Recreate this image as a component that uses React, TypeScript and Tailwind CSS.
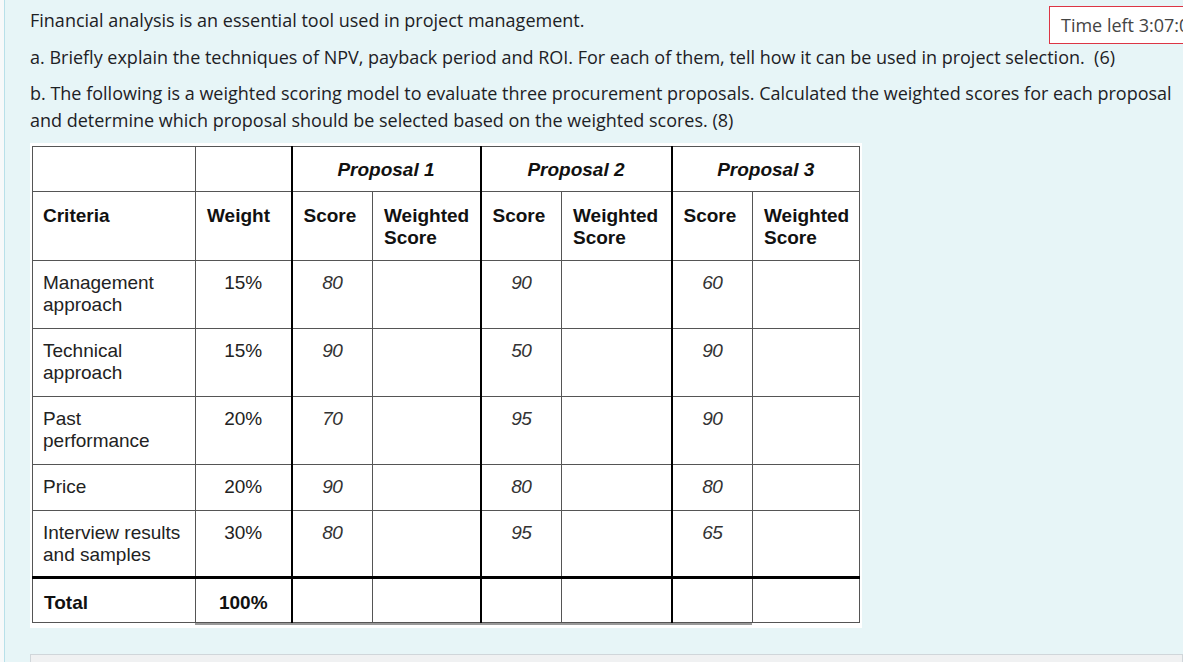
const rows = [
  { name: ['Management', 'approach'], weight: '15%', s: ['80', '90', '60'], h: 'h-[68px]' },
  { name: ['Technical', 'approach'], weight: '15%', s: ['90', '50', '90'], h: 'h-[68px]' },
  { name: ['Past', 'performance'], weight: '20%', s: ['70', '95', '90'], h: 'h-[68px]' },
  { name: ['Price'], weight: '20%', s: ['90', '80', '80'], h: 'h-[46px]' },
  { name: ['Interview results', 'and samples'], weight: '30%', s: ['80', '95', '65'], h: 'h-[67px]' },
]

const cell = 'border border-[#555] align-top pt-[11px] leading-[22px]'
const thickL = 'border-l-2 border-l-black'

function ScoringTable() {
  return (
    <div className="bg-white w-[832px] pl-[2px] pt-[3px] pb-[3px]">
      <table
        className="table-fixed border-collapse text-[19px] text-[#111]"
        style={{ fontFamily: '"Liberation Sans", Arial, sans-serif' }}
      >
        <colgroup>
          <col className="w-[163px]" />
          <col className="w-[96px]" />
          <col className="w-[81px]" />
          <col className="w-[108px]" />
          <col className="w-[81px]" />
          <col className="w-[110px]" />
          <col className="w-[81px]" />
          <col className="w-[107px]" />
        </colgroup>
        <tbody>
          <tr className="h-[45px]">
            <td className={cell} />
            <td className={cell} />
            {['Proposal 1', 'Proposal 2', 'Proposal 3'].map((p) => (
              <td key={p} colSpan={2} className={`${cell} ${thickL} pt-[12px] text-center font-bold italic`}>
                {p}
              </td>
            ))}
          </tr>
          <tr className="h-[69px]">
            <td className={`${cell} pt-[13px] pl-[10px] font-bold`}>Criteria</td>
            <td className={`${cell} pt-[13px] pl-[11px] font-bold`}>Weight</td>
            {[0, 1, 2].map((i) => (
              <>
                <td key={`s${i}`} className={`${cell} ${thickL} pt-[13px] pl-[11px] font-bold`}>Score</td>
                <td key={`w${i}`} className={`${cell} pt-[13px] pl-[11px] font-bold`}>
                  Weighted
                  <br />
                  Score
                </td>
              </>
            ))}
          </tr>
          {rows.map((r, idx) => (
            <tr key={r.weight + idx} className={r.h}>
              <td className={`${cell} pl-[10px] text-[#222]`}>
                {r.name.map((n) => (
                  <div key={n}>{n}</div>
                ))}
              </td>
              <td className={`${cell} text-center text-[#222]`}>{r.weight}</td>
              {r.s.map((v, i) => (
                <>
                  <td key={`s${i}`} className={`${cell} ${thickL} text-center italic text-[#333] tracking-[-0.5px]`}>
                    {v}
                  </td>
                  <td key={`w${i}`} className={cell} />
                </>
              ))}
            </tr>
          ))}
          <tr className="h-[45px]">
            <td className={`${cell} border-t-[3px] border-t-black pl-[11px] pt-[13px] font-bold`}>Total</td>
            <td className={`${cell} border-t-[3px] border-t-black pt-[13px] text-center font-bold`}>100%</td>
            {[0, 1, 2].map((i) => (
              <>
                <td key={`s${i}`} className={`${cell} ${thickL} border-t-[3px] border-t-black`} />
                <td key={`w${i}`} className={`${cell} border-t-[3px] border-t-black`} />
              </>
            ))}
          </tr>
        </tbody>
      </table>
      <div className="ml-[163px] w-[557px] h-[2px] bg-[#999]" />
    </div>
  )
}

export default function App() {
  return (
    <div className="w-[1183px] h-[662px] overflow-hidden bg-[#f7f9fa] pl-[4px]">
      <div
        className="h-full border-l border-[#b8e0e9] bg-[#e7f5f7] text-[#1d2125] text-[18px]"
        style={{ fontFamily: '"Open Sans", "Noto Sans", sans-serif' }}
      >
        <div className="pl-[25px] pt-[7px]">
          <div className="flex items-start justify-between h-[27px]">
            <p className="leading-[27px]">Financial analysis is an essential tool used in project management.</p>
            <div className="shrink-0 mt-[-1px] mr-[-80px] w-[214px] h-[38px] border border-[#dc3545] bg-white pl-[11px] flex items-center text-[#444]">
              Time left 3:07:05
            </div>
          </div>
          <p className="leading-[27px] mt-[10px] whitespace-nowrap">
            a. Briefly explain the techniques of NPV, payback period and ROI. For each of them, tell how it can be used in project selection.&nbsp; (6)
          </p>
          <p className="leading-[27px] mt-[9px] pr-[4px]">
            b. The following is a weighted scoring model to evaluate three procurement proposals. Calculated the weighted scores for each proposal and determine which proposal should be selected based on the weighted scores. (8)
          </p>
          <div className="mt-[9px]">
            <ScoringTable />
          </div>
          <div className="mt-[26px] h-[40px] border border-[#d0d6da] bg-[#f0f1f2]" />
        </div>
      </div>
    </div>
  )
}
